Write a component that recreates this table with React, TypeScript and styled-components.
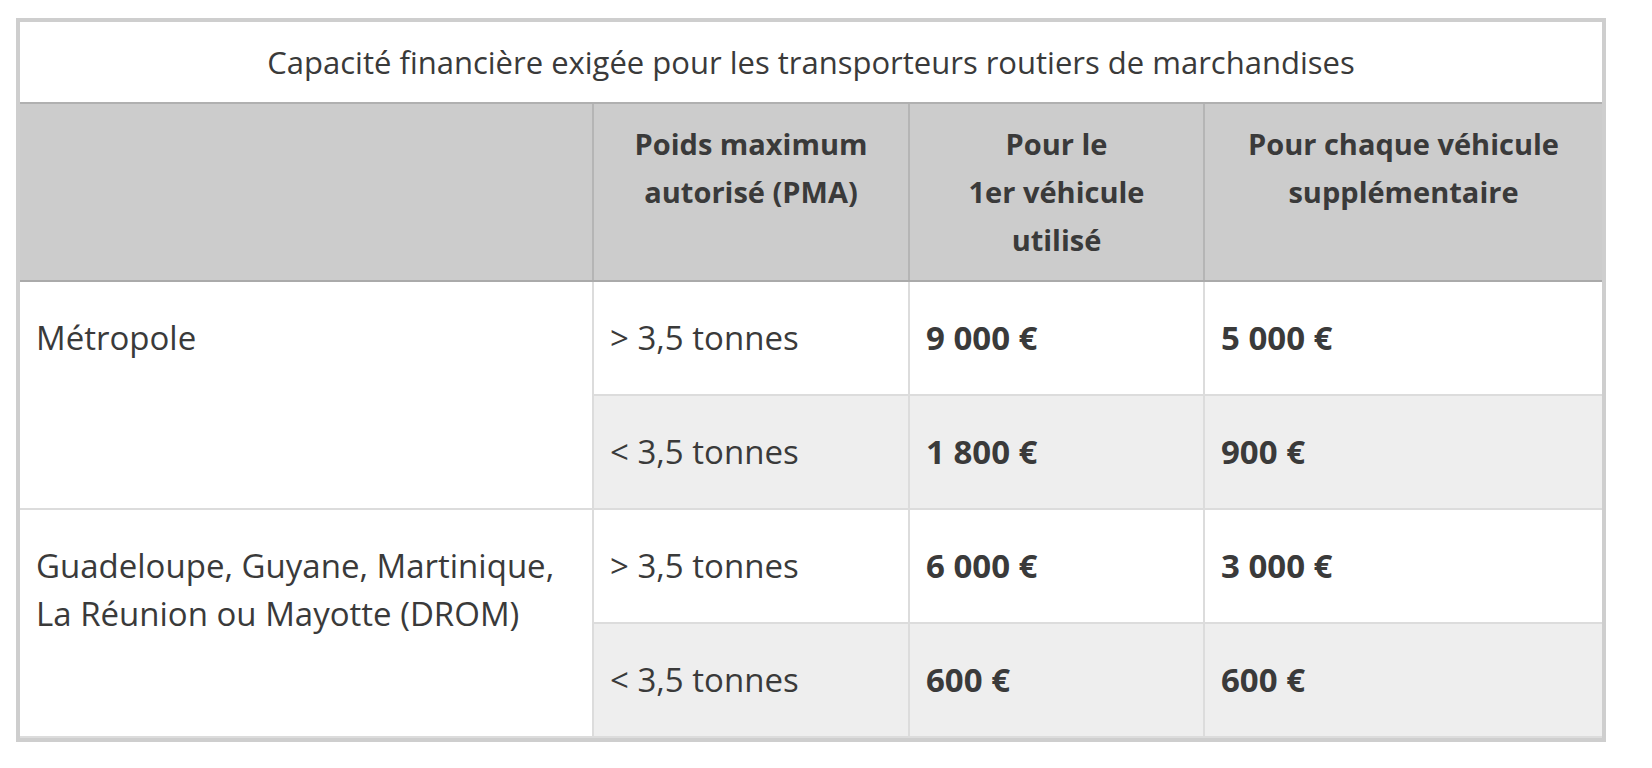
import React from 'react'
import styled, { createGlobalStyle } from 'styled-components'

const GlobalStyle = createGlobalStyle`
  html, body {
    margin: 0;
    padding: 0;
    background: #ffffff;
  }
  body {
    font-family: "Open Sans", Lato, "Noto Sans", sans-serif;
    color: #3a3a3a;
  }
`

const Page = styled.div`
  padding: 18px 0 0 16px;
`

const Frame = styled.div`
  width: 1582px;
  border: 4px solid #cecece;
  background: #ffffff;
`

const Caption = styled.div`
  padding: 16px;
  font-size: 31px;
  line-height: 48px;
  text-align: center;
  border-bottom: 2px solid #b0b0b0;
`

const Table = styled.table`
  width: 100%;
  border-collapse: collapse;
  table-layout: fixed;
`

const HeadCell = styled.th`
  background: #cccccc;
  padding: 16px;
  font-size: 29px;
  line-height: 48px;
  font-weight: 700;
  text-align: center;
  vertical-align: top;
  border-left: 2px solid #b5b5b5;
  border-bottom: 2px solid #aaaaaa;

  &:first-child {
    border-left: none;
  }
`

const Cell = styled.td<{ $shade?: boolean; $bold?: boolean }>`
  padding: 32px 16px;
  font-size: 33px;
  line-height: 48px;
  font-weight: ${p => (p.$bold ? 700 : 400)};
  vertical-align: middle;
  background: ${p => (p.$shade ? '#eeeeee' : '#ffffff')};
  border: 2px solid #dcdcdc;

  &:first-child {
    border-left: none;
  }
  &:last-child {
    border-right: none;
  }
`

const RegionCell = styled(Cell)`
  vertical-align: top;
`

type Row = { pma: string; first: string; extra: string }
type Group = { region: React.ReactNode; rows: Row[] }

const groups: Group[] = [
  {
    region: 'Métropole',
    rows: [
      { pma: '> 3,5 tonnes', first: '9 000 €', extra: '5 000 €' },
      { pma: '< 3,5 tonnes', first: '1 800 €', extra: '900 €' },
    ],
  },
  {
    region: (
      <>
        Guadeloupe, Guyane, Martinique,
        <br />
        La Réunion ou Mayotte (DROM)
      </>
    ),
    rows: [
      { pma: '> 3,5 tonnes', first: '6 000 €', extra: '3 000 €' },
      { pma: '< 3,5 tonnes', first: '600 €', extra: '600 €' },
    ],
  },
]

export default function App() {
  return (
    <>
      <GlobalStyle />
      <Page>
        <Frame>
          <Caption>Capacité financière exigée pour les transporteurs routiers de marchandises</Caption>
          <Table>
            <colgroup>
              <col style={{ width: 573 }} />
              <col style={{ width: 316 }} />
              <col style={{ width: 295 }} />
              <col style={{ width: 398 }} />
            </colgroup>
            <thead>
              <tr>
                <HeadCell />
                <HeadCell>
                  Poids maximum
                  <br />
                  autorisé (PMA)
                </HeadCell>
                <HeadCell>
                  Pour le
                  <br />
                  1er véhicule
                  <br />
                  utilisé
                </HeadCell>
                <HeadCell>
                  Pour chaque véhicule
                  <br />
                  supplémentaire
                </HeadCell>
              </tr>
            </thead>
            <tbody>
              {groups.map((g, gi) =>
                g.rows.map((r, ri) => (
                  <tr key={`${gi}-${ri}`}>
                    {ri === 0 && <RegionCell rowSpan={g.rows.length}>{g.region}</RegionCell>}
                    <Cell $shade={ri % 2 === 1}>{r.pma}</Cell>
                    <Cell $shade={ri % 2 === 1} $bold>
                      {r.first}
                    </Cell>
                    <Cell $shade={ri % 2 === 1} $bold>
                      {r.extra}
                    </Cell>
                  </tr>
                ))
              )}
            </tbody>
          </Table>
        </Frame>
      </Page>
    </>
  )
}
